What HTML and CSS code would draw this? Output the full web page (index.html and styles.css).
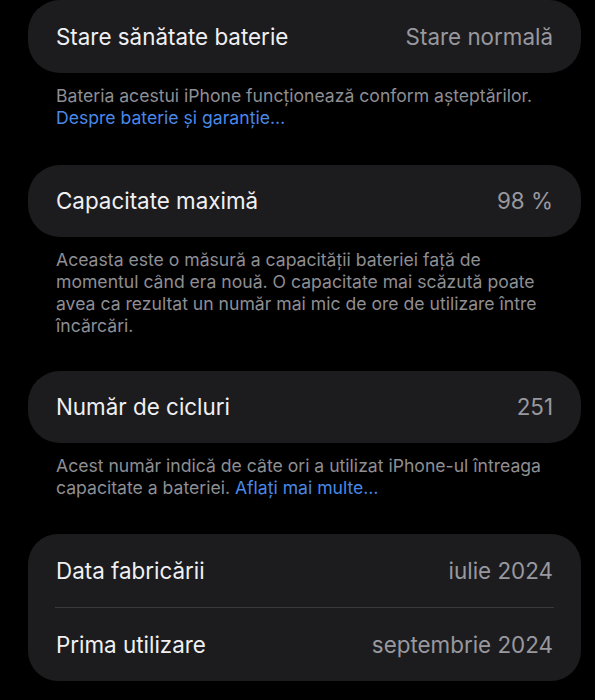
FILE: index.html
```html
<!DOCTYPE html>
<html lang="ro">
<head>
<meta charset="utf-8">
<link rel="stylesheet" href="styles.css">
</head>
<body>
<main class="page">
  <section class="card card-first">
    <div class="row"><span class="label">Stare sănătate baterie</span><span class="value">Stare normală</span></div>
  </section>
  <p class="note">Bateria acestui iPhone funcționează conform așteptărilor.<br><span class="link">Despre baterie și garanție…</span></p>

  <section class="card card-second">
    <div class="row"><span class="label">Capacitate maximă</span><span class="value">98 %</span></div>
  </section>
  <p class="note">Aceasta este o măsură a capacității bateriei față de<br>momentul când era nouă. O capacitate mai scăzută poate<br>avea ca rezultat un număr mai mic de ore de utilizare între<br>încărcări.</p>

  <section class="card card-third">
    <div class="row"><span class="label">Număr de cicluri</span><span class="value">251</span></div>
  </section>
  <p class="note">Acest număr indică de câte ori a utilizat iPhone-ul întreaga<br>capacitate a bateriei. <span class="link">Aflați mai multe…</span></p>

  <section class="card card-group">
    <div class="row"><span class="label">Data fabricării</span><span class="value">iulie 2024</span></div>
    <div class="sep"></div>
    <div class="row"><span class="label">Prima utilizare</span><span class="value">septembrie 2024</span></div>
  </section>
</main>
</body>
</html>
```

FILE: styles.css
```css
html, body {
  margin: 0;
  padding: 0;
  background: #000;
}
body {
  width: 595px;
  height: 700px;
  overflow: hidden;
  font-family: Inter, "Noto Sans", "Liberation Sans", sans-serif;
  -webkit-font-smoothing: antialiased;
}
.page {
  display: flex;
  flex-direction: column;
  padding: 0 14px 0 28px;
}
.card {
  background: #1c1c1e;
  border-radius: 32px;
}
.card-first .row {
  height: 73px;
}
.card-second {
  margin-top: 35px;
}
.card-third {
  margin-top: 33px;
}
.card-group {
  margin-top: 35px;
  border-radius: 30px;
}
.row {
  height: 72px;
  display: flex;
  align-items: center;
  justify-content: space-between;
  padding: 0 28px;
}
.label {
  color: #f0f0f3;
  font-size: 22.4px;
  font-weight: 400;
}
.value {
  color: #98989e;
  font-size: 22.4px;
  font-weight: 400;
}
.sep {
  height: 1px;
  background: #3a3a3c;
  margin: 0 27px;
}
.card-group .row {
  height: 73px;
}
.note {
  margin: 12px 0 0 0;
  padding: 0 28px;
  color: #8e8e93;
  font-size: 17.6px;
  line-height: 22.3px;
}
.link {
  color: #4a88e8;
}
```
